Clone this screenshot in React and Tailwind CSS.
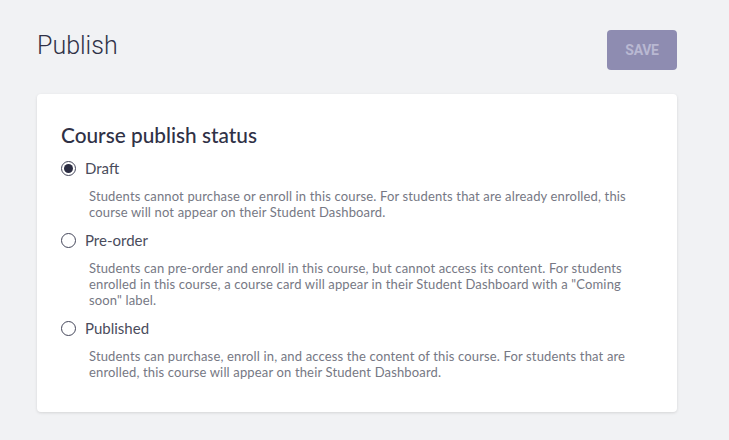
import { useState } from 'react'

const OPTIONS = [
  {
    value: 'draft',
    label: 'Draft',
    text: 'Students cannot purchase or enroll in this course. For students that are already enrolled, this course will not appear on their Student Dashboard.',
  },
  {
    value: 'preorder',
    label: 'Pre-order',
    text: 'Students can pre-order and enroll in this course, but cannot access its content. For students enrolled in this course, a course card will appear in their Student Dashboard with a "Coming soon" label.',
  },
  {
    value: 'published',
    label: 'Published',
    text: 'Students can purchase, enroll in, and access the content of this course. For students that are enrolled, this course will appear on their Student Dashboard.',
  },
]

function Radio({ checked }) {
  return (
    <span className="flex h-[15px] w-[15px] shrink-0 items-center justify-center rounded-full border border-[#44465a] bg-white">
      {checked && <span className="h-[9px] w-[9px] rounded-full bg-[#2b2d42]" />}
    </span>
  )
}

export default function App() {
  const [status, setStatus] = useState('draft')

  return (
    <div className="min-h-[440px] bg-[#f1f2f4] pl-[37px] pt-[30px] font-['Lato','Noto_Sans',sans-serif]">
      <div className="flex w-[640px] items-start justify-between">
        <h1 className="mt-[2px] font-['Roboto',sans-serif] text-[25px] font-light leading-[28px] text-[#2f3146]">
          Publish
        </h1>
        <button
          disabled
          className="h-[40px] w-[70px] rounded-[4px] bg-[#8e8cb1] font-['Roboto',sans-serif] text-[14px] font-bold tracking-[-0.3px] text-[#b9b8d2]"
        >
          SAVE
        </button>
      </div>

      <div className="mt-[24px] w-[640px] rounded-[4px] bg-white px-[24px] pb-[32px] pt-[27px] shadow-[0_1px_3px_rgba(0,0,0,0.12)]">
        <h2 className="text-[20.8px] font-medium leading-[28px] text-[#2f3146]">
          Course publish status
        </h2>
        <div className="mt-[7px] flex flex-col gap-[8px]">
          {OPTIONS.map((o) => (
            <div key={o.value}>
              <label
                className="flex h-[24px] cursor-pointer items-center gap-[9px]"
                onClick={() => setStatus(o.value)}
              >
                <Radio checked={status === o.value} />
                <span className="text-[15px] text-[#4a4c5c]">{o.label}</span>
              </label>
              <p className="mt-[8px] pl-[28px] text-[13px] leading-[16px] tracking-[0.15px] text-[#767884]">
                {o.text}
              </p>
            </div>
          ))}
        </div>
      </div>
    </div>
  )
}
